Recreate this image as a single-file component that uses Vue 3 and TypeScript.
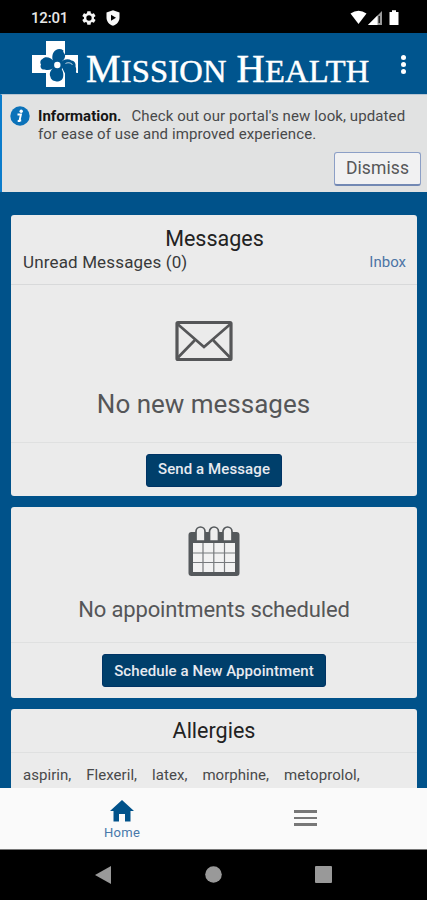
<script setup lang="ts">
const allergies: string[] = ['aspirin,', 'Flexeril,', 'latex,', 'morphine,', 'metoprolol,']
</script>

<template>
  <div class="screen">
    <div class="status">
      <span class="clock">12:01</span>
      <svg class="gear" width="16" height="16" viewBox="0 0 24 24">
        <path fill="#f4f4f4" fill-rule="evenodd" d="M19.4 13c.1-.6.1-1.300 0-2l2.100-1.700c.2-.1.300-.4.100-.600l-2-3.500c-.1-.2-.4-.3-.6-.2l-2.500 1c-.5-.4-1.100-.7-1.700-1L14.400 2.400c0-.2-.2-.4-.5-.4h-4c-.2 0-.4.200-.5.400L9 5c-.6.300-1.200.6-1.700 1l-2.500-1c-.2-.1-.5 0-.6.200l-2 3.500c-.1.200-.1.500.1.600L4.500 11c-.1.700-.1 1.300 0 2l-2.200 1.700c-.2.100-.2.400-.1.600l2 3.500c.1.200.4.300.6.200l2.500-1c.5.400 1.100.7 1.700 1l.4 2.600c.1.200.3.400.5.400h4c.3 0 .5-.2.500-.4l.4-2.600c.6-.3 1.200-.6 1.700-1l2.500 1c.2.100.5 0 .6-.2l2-3.500c.2-.2.100-.5-.1-.6zM12 16a4 4 0 1 1 0-8 4 4 0 0 1 0 8z" />
      </svg>
      <svg class="shield" width="14" height="16" viewBox="0 0 14 16">
        <path fill="#f8f8f8" fill-rule="evenodd" d="M7 .3 13.500 2.600v5C13.500 11.500 10.800 14.700 7 15.800 3.200 14.700.5 11.500.5 7.600v-5zM5 4.700v6l5-3z" />
      </svg>
      <svg class="signals" width="50" height="16" viewBox="0 0 50 16">
        <path fill="#fff" d="M.5 3.500Q8.500-2 16.500 3.500L8.500 14z" />
        <path fill="#9a9a9a" d="M18 15 32 1v14z" />
        <path fill="#fff" d="M18 15 27.500 5.500V15z" />
        <path fill="#222" d="M28.500 6h1.500v7h-1.500z" />
        <path fill="#fff" d="M39.500 2H42V.3h4V2h2.500v13h-9z" />
      </svg>
    </div>

    <header class="header">
      <svg class="cross" width="46" height="46" viewBox="0 0 46 46">
        <path fill="#fff" d="M14 0h19v14h13v18h-1.500L42 28 33 32v14H14V32H0V14h14z" />
        <g fill="#00558e">
          <path d="M22.500 22C19.500 19 20 14 21.500 11.500 23.500 8 28 7 31.500 9.500c-1.300 2 2.500 3 1.500 6.500-.7 3-3 4-5.500 6z" />
          <path d="M23 21.500C19 16 13 15 10.500 18c-2.500 1-2.500 4-1.500 5.500-1.500 3 1 5.500 3.500 5C17 30 20 28.500 23 26z" />
          <path d="M22.500 26C18 29 17 33 18.500 36c.5 3.500 4 4 6 4.500 4 0 6-2 6.500-4 1-3.500 0-8-3.500-11z" />
          <path d="M28 22.500C30.500 18.500 36 17 39.500 19.500c3.500.5 4.500 3.500 4 6 1 2.500 1 5-.5 7H33z" />
          <circle cx="25.300" cy="24" r="6" />
        </g>
        <path d="M33.500 22.500c3-1.500 6-.5 7 1.500" fill="none" stroke="#fff" stroke-width=".8" />
        <circle cx="25.300" cy="24" r="3.200" fill="#fff" />
      </svg>
      <div class="brand">M<small>ISSION</small> H<small>EALTH</small></div>
      <div class="dots"><i></i><i></i><i></i></div>
    </header>

    <section class="notice">
      <svg class="info" width="20" height="20" viewBox="0 0 20 20">
        <circle cx="10" cy="10" r="9.700" fill="#0b72b9" />
        <circle cx="11.200" cy="5.200" r="1.700" fill="#fff" />
        <path d="M7.500 8.500H11L9.600 14.500H11.200M10.900 8.500 9.400 15H7.700" fill="none" stroke="#fff" stroke-width="1.800" />
      </svg>
      <p class="notice-text"><b>Information.</b><span>Check out our portal's new look, updated</span><br><span>for ease of use and improved experience.</span></p>
      <button class="dismiss">Dismiss</button>
    </section>

    <main class="content">
      <article class="card messages">
        <div class="card-head">
          <h2>Messages</h2>
          <div class="sub"><span class="unread">Unread Messages (0)</span><a class="inbox">Inbox</a></div>
        </div>
        <div class="body">
          <svg width="58" height="42" viewBox="0 0 58 42" fill="none" stroke="#555658">
            <rect x="2" y="2.500" width="54" height="37" rx="1" stroke-width="3.200" />
            <path d="M2.500 4 29 27 55.500 4M3 37.500 19.500 20.500M55 37.500 38.500 20.500" stroke-width="2.700" />
          </svg>
          <p class="empty">No new messages</p>
        </div>
        <div class="foot"><button class="primary send">Send a Message</button></div>
      </article>

      <article class="card appointments">
        <div class="body">
          <svg width="52" height="51" viewBox="0 0 52 51">
            <rect x=".5" y="6" width="51" height="44" rx="3" fill="#55595c" />
            <path fill="#f2f2f2" d="M5 17h42v29H5z" />
            <path d="M15 17v29M25.800 17v29M36.500 17v29M5 27h42M5 36.500h42" stroke="#777a7d" stroke-width="1.200" />
            <g fill="#eee" stroke="#55595c" stroke-width="1.700">
              <path d="M8 15V5.500a4.500 4.500 0 0 1 9 0V15zM21.500 15V5.500a4.500 4.500 0 0 1 9 0V15zM35 15V5.500a4.500 4.500 0 0 1 9 0V15z" />
            </g>
          </svg>
          <p class="empty">No appointments scheduled</p>
        </div>
        <div class="foot"><button class="primary schedule">Schedule a New Appointment</button></div>
      </article>

      <article class="card allergies">
        <h2>Allergies</h2>
        <ul>
          <li v-for="item in allergies" :key="item">{{ item }}</li>
        </ul>
      </article>
    </main>

    <nav class="tabs">
      <div class="tab home">
        <svg width="24" height="22" viewBox="0 0 24 22"><path fill="#00528a" d="M12 0 24 11h-3.500v10.500h-5.500v-7.500H9v7.500H3.500V11H0z" /></svg>
        <span>Home</span>
      </div>
      <div class="tab menu"><i></i><i></i><i></i></div>
    </nav>

    <div class="system">
      <svg width="16" height="18" viewBox="0 0 16 18"><path fill="#999" d="M0 9 16 0v18z" /></svg>
      <svg width="17" height="17" viewBox="0 0 17 17"><circle cx="8.500" cy="8.500" r="8.300" fill="#999" /></svg>
      <svg width="17" height="17" viewBox="0 0 17 17"><rect width="17" height="17" rx="1" fill="#999" /></svg>
    </div>
  </div>
</template>

<style>
body { margin: 0; background: #000; }
</style>

<style scoped>
* { box-sizing: border-box; }
.screen {
  width: 427px;
  height: 900px;
  display: flex;
  flex-direction: column;
  overflow: hidden;
  background: #00528a;
  font-family: Roboto, sans-serif;
  color: #222;
}
svg { display: block; flex: none; }
h2, p, ul { margin: 0; padding: 0; font-weight: 400; }
button { font-family: inherit; padding: 0; white-space: nowrap; }

.status { height: 33px; flex: none; background: #000; display: flex; align-items: flex-start; padding: 10px 0 0 31px; }
.clock { width: 50px; color: #e8e8e8; font-size: 15px; line-height: 17px; font-weight: 500; letter-spacing: -.2px; }
.shield { margin-left: 9px; }
.signals { margin-left: 230px; }

.header { height: 61px; flex: none; display: flex; align-items: flex-start; padding: 8px 0 0 32px; background: #00558e; }
.brand {
  width: 300px; margin-left: 8px; padding-top: 6px;
  font-family: "Liberation Serif", serif; color: #fff;
  font-size: 39px; line-height: 44px; white-space: nowrap; letter-spacing: .18px;
  -webkit-text-stroke: .5px #fff;
}
.brand small { font-size: 32.500px; }
.dots { display: flex; flex-direction: column; gap: 2px; padding: 14px 0 0 15px; }
.dots i { width: 5px; height: 5px; border-radius: 50%; background: #fff; }

.notice {
  height: 98px; flex: none; display: flex; flex-wrap: wrap; align-content: flex-start;
  background: #e1e2e2; border-left: 2px solid #0b7ccb; border-top: 1px solid #b7c5d2;
  padding: 11px 6px 0 8px;
}
.notice-text { width: 385px; padding: 1px 0 1px 8px; font-size: 15px; line-height: 18px; color: #48494a; white-space: nowrap; }
.notice-text b { color: #151515; margin-right: 10px; }
.notice-text span { letter-spacing: .1px; }
.dismiss {
  width: 87px; height: 34px; margin: 8px 0 0 auto;
  border: 1px solid #8c9fc6; border-bottom: 2px solid #7288b3; border-radius: 3px;
  background: #f1f1f2; color: #565759; font-size: 17.500px; letter-spacing: .1px; padding-bottom: 1px;
}

.content { height: 596px; flex: none; overflow: hidden; padding: 23px 10px 0 11px; display: flex; flex-direction: column; gap: 11px; }
.card { background: #ebebeb; border-radius: 3px; flex: none; text-align: center; }
.messages { height: 281px; }
.card-head { height: 70px; border-bottom: 1px solid #d8d9da; padding: 11px 11px 0 12px; }
h2 { font-size: 21.500px; line-height: 26px; }
.sub { display: flex; justify-content: space-between; line-height: 20px; }
.unread { font-size: 17px; color: #38393a; letter-spacing: .15px; }
.inbox { font-size: 15px; color: #4c74a5; }
.body { display: flex; flex-direction: column; align-items: center; }
.messages .body { height: 157px; padding: 35px 21px 0 0; }
.empty { color: #555658; white-space: nowrap; }
.messages .empty { font-size: 26px; line-height: 32px; margin-top: 26px; }
.foot { border-top: 1px solid #dfe0e0; display: flex; justify-content: center; padding-top: 11px; }
.primary { height: 33px; border: 1px solid #003364; border-radius: 3px; background: #003f6b; color: #e7eaf0; font-size: 15px; font-weight: 500; }
.send { width: 136px; letter-spacing: .1px; padding-bottom: 3px; }
.schedule { width: 224px; letter-spacing: .07px; }

.appointments { height: 191px; }
.appointments .body { height: 135px; padding-top: 19px; }
.appointments .empty { font-size: 22px; line-height: 28px; margin-top: 19px; letter-spacing: -.15px; }

.allergies { height: 120px; }
.allergies h2 { height: 44px; padding-top: 9px; border-bottom: 1px solid #dfe0e0; }
ul { list-style: none; display: flex; padding: 13px 0 0 12px; gap: 15px; font-size: 15px; line-height: 18px; color: #48494a; }
li { letter-spacing: .04px; }

.tabs { height: 62px; flex: none; display: flex; background: #fafafa; border-bottom: 1px solid #777; }
.tab { display: flex; flex-direction: column; align-items: center; }
.home { width: 244px; padding-top: 12px; font-size: 13px; line-height: 15px; color: #4878aa; letter-spacing: .3px; }
.home span { margin-top: 3px; }
.menu { width: 122px; padding-top: 22px; gap: 4px; }
.menu i { width: 23px; height: 2.500px; background: #777; }
.system { flex: 1; background: #000; display: flex; justify-content: space-between; padding: 16px 95px 0; align-items: flex-start; }
</style>
